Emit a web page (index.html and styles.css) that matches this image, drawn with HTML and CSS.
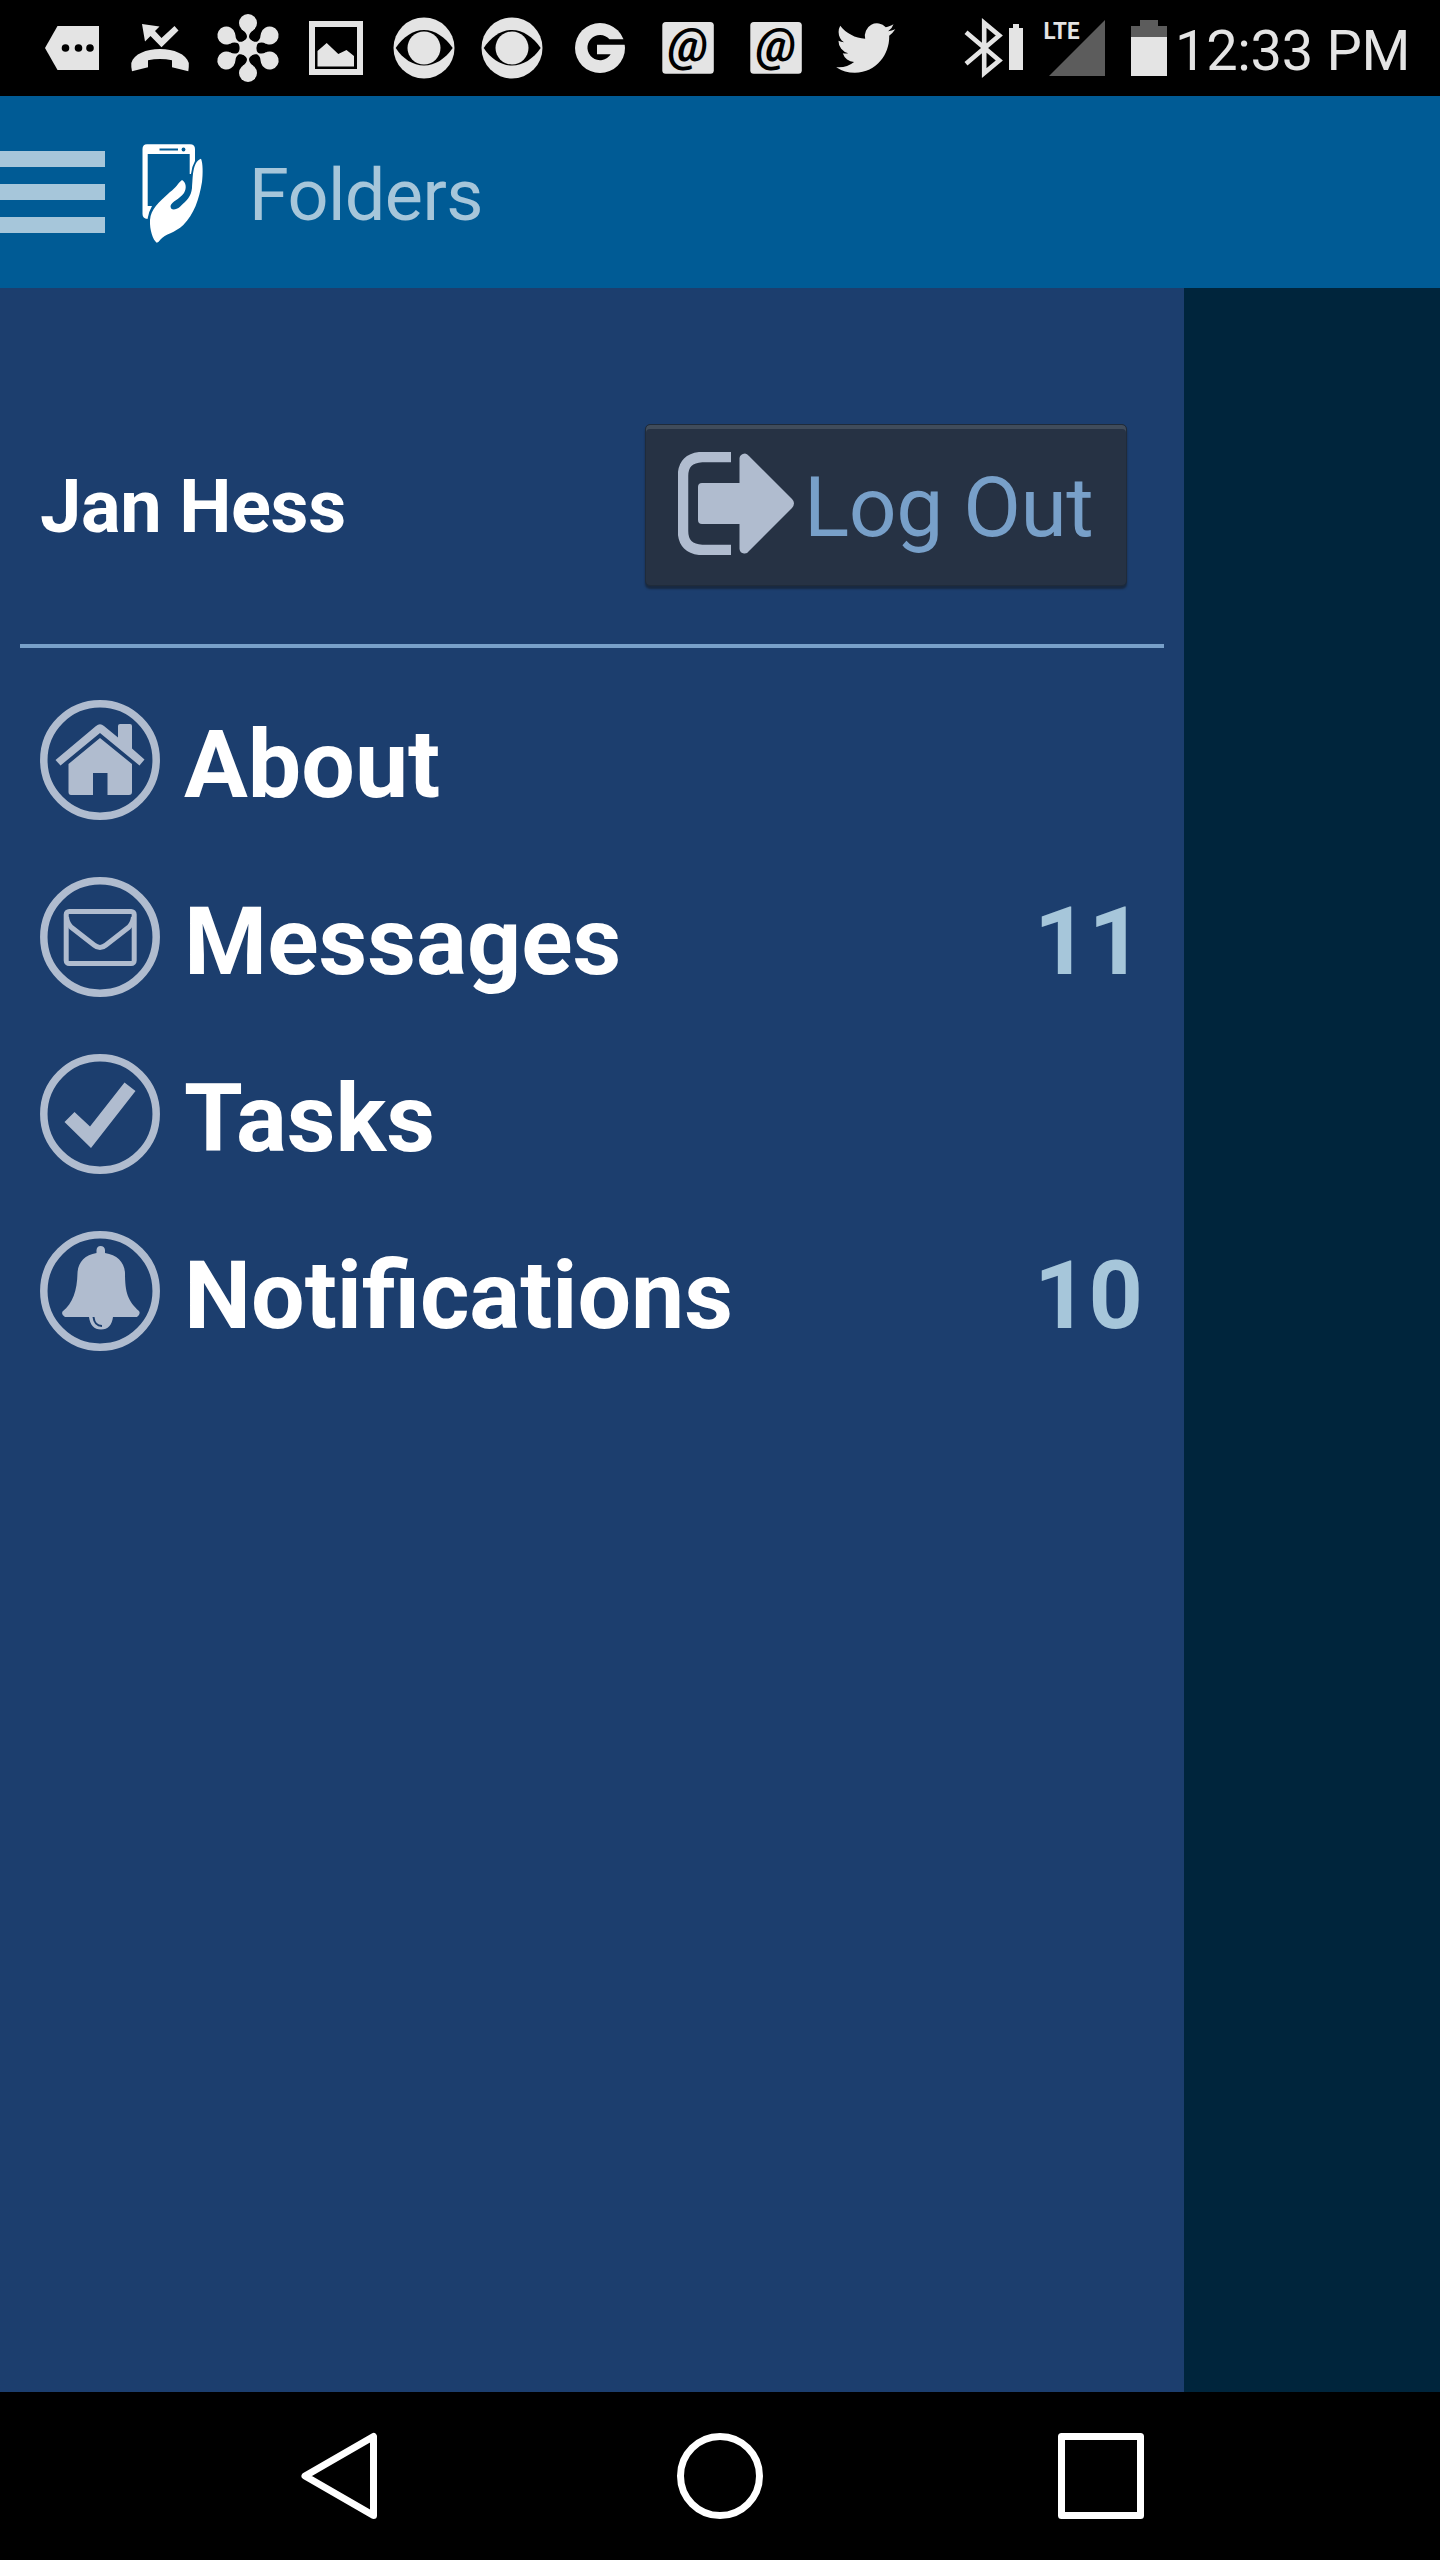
FILE: index.html
```html
<!DOCTYPE html>
<html lang="en">
<head>
  <meta charset="UTF-8">
  <meta name="viewport" content="width=device-width, initial-scale=1.0">
  <title>Folders</title>
  <link rel="stylesheet" href="styles.css">
</head>
<body>
  <!-- Status bar -->
  <div class="status-bar">
    <div class="status-icons">
      <svg class="status-icon" viewBox="28 0 88 96">
        <path d="M45 48L57.5 26H99V70H57.5z"/>
        <g fill="#000"><circle cx="65.5" cy="48" r="3.8"/><circle cx="78.5" cy="48" r="3.8"/><circle cx="90" cy="48" r="3.8"/></g>
      </svg>
      <svg class="status-icon" viewBox="116 0 88 96">
        <path d="M132 71.3Q131 66 131.3 63C134 54 146 49 160 49S186 54 188.8 63Q189 66 188.3 71.3L172 67.3V60.3Q160 57.5 148 60.3V67.3z"/>
        <path d="M142 24L159.5 26.5L155 31L161.5 38L174.5 26L178.5 30.5L161.5 47.3L150.5 36L145 41.5z"/>
      </svg>
      <svg class="status-icon" viewBox="204 0 88 96">
        <defs>
          <g id="arm">
            <circle cx="248" cy="23" r="9"/>
            <path d="M242.5 30Q247 33 247 37Q246 41 239 43L248 48L257 43Q250 41 249 37Q249 33 253.5 30z"/>
          </g>
        </defs>
        <use href="#arm"/>
        <use href="#arm" transform="rotate(60 248 48)"/>
        <use href="#arm" transform="rotate(120 248 48)"/>
        <use href="#arm" transform="rotate(180 248 48)"/>
        <use href="#arm" transform="rotate(240 248 48)"/>
        <use href="#arm" transform="rotate(300 248 48)"/>
      </svg>
      <svg class="status-icon" viewBox="292 0 88 96">
        <path fill-rule="evenodd" d="M309 21H363V75H309zM315 27V69H357V27z"/>
        <path d="M317.5 66.5V51L326.7 43L338.3 54L346.5 50L354 56V66.5z"/>
      </svg>
      <svg class="status-icon" viewBox="380 0 88 96">
        <circle cx="424" cy="48" r="30.5"/>
        <path fill="#000" d="M395.7 48C403 37 413 30 424 30S445 37 452.7 48C445 59 435 65.5 424 65.5S403 59 395.7 48z"/>
        <circle cx="424" cy="48" r="16.5"/>
      </svg>
      <svg class="status-icon" viewBox="380 0 88 96">
        <circle cx="424" cy="48" r="30.5"/>
        <path fill="#000" d="M395.7 48C403 37 413 30 424 30S445 37 452.7 48C445 59 435 65.5 424 65.5S403 59 395.7 48z"/>
        <circle cx="424" cy="48" r="16.5"/>
      </svg>
      <svg class="status-icon" viewBox="556 0 88 96">
        <circle cx="600" cy="48" r="25"/>
        <path fill="#000" d="M626 39.3H609.5A12.6 12.6 0 1 0 610.7 54.3H597V44.7H626z"/>
      </svg>
      <svg class="status-icon" viewBox="644 0 88 96">
        <rect x="662.3" y="22" width="51.5" height="51.7" rx="3.5"/>
        <text class="at-sign" x="688" y="60.500">@</text>
      </svg>
      <svg class="status-icon" viewBox="644 0 88 96">
        <rect x="662.3" y="22" width="51.5" height="51.7" rx="3.5"/>
        <text class="at-sign" x="688" y="60.500">@</text>
      </svg>
      <svg class="status-icon" viewBox="820 0 88 96">
        <path transform="translate(836.2 17.7) scale(2.46 2.53)" d="M23.953 4.57a10 10 0 01-2.825.775 4.958 4.958 0 002.163-2.723c-.951.555-2.005.959-3.127 1.184a4.92 4.92 0 00-8.384 4.482C7.69 8.095 4.067 6.13 1.64 3.162a4.822 4.822 0 00-.666 2.475c0 1.71.87 3.213 2.188 4.096a4.904 4.904 0 01-2.228-.616v.06a4.923 4.923 0 003.946 4.827 4.996 4.996 0 01-2.212.085 4.936 4.936 0 004.604 3.417 9.867 9.867 0 01-6.102 2.105c-.39 0-.779-.023-1.17-.067a13.995 13.995 0 007.557 2.209c9.053 0 13.998-7.496 13.998-13.985 0-.21 0-.42-.015-.63A9.935 9.935 0 0024 4.59z"/>
      </svg>
    </div>
    <div class="system-icons">
      <!-- Bluetooth, signal, battery -->
      <svg class="system-icon" viewBox="960 0 216 96">
        <path fill="none" stroke="#e4e4e4" stroke-width="4.6" d="M966 32.3L999.3 60.5L984.2 73V23L999.3 35.5L966 63.7"/>
        <path d="M1009 28H1013V24H1019V28H1023V70H1009z"/>
        <path fill="#5c5c5c" d="M1105 20V76H1049z"/>
        <text class="lte" x="1043.500" y="39" textLength="36" lengthAdjust="spacingAndGlyphs">LTE</text>
        <path fill="#5c5c5c" d="M1131 26H1140V20H1158V26H1167V38H1131z"/>
        <path d="M1131 37H1167V76H1131z"/>
      </svg>
      <span class="time">12:33 PM</span>
    </div>
  </div>

  <!-- App bar -->
  <header class="app-bar">
    <div class="menu-btn"><span></span><span></span><span></span></div>
    <svg class="app-logo" viewBox="135 138 75 112">
      <path fill-rule="evenodd" d="M142.5 149Q142.5 144.3 147 144.3H190Q195 144.3 195 149V161Q191.5 167 191 174H189.7V154H147.7V206H152Q148.5 212 147.5 219Q142.5 218.5 142.5 214zM159.5 148.5V150.5H178V148.5z"/>
      <circle cx="183.5" cy="149.5" r="1.9" fill="#005b95"/>
      <path d="M156.7 242.7C153 240 149.5 230 150 220C151 209 158 203 170 192C176 188 178 183 182 180C186 182 187 188 184 193C180 199 172 201 170.5 206C170.5 211 176 210 180 206.7C187 200 191 197 192 188C193 178 192 162 201 158.7C203 163 203 174 202 182C199 200 194 214 183.3 225C175 233 165 234 160.5 239.5Q158.5 242.5 156.7 242.7z"/>
    </svg>
    <h1>Folders</h1>
  </header>

  <div class="content">
    <!-- Drawer -->
    <nav class="drawer">
      <div class="user-row">
        <span class="user-name">Jan Hess</span>
        <button class="logout-btn">
          <svg class="logout-icon" viewBox="0 0 116 103">
            <path fill="none" stroke="#b0bccf" stroke-width="10.5" d="M53 5H24Q5 6 5 24V79Q5 97 24 98H53"/>
            <path d="M20 35Q20 31 24 31H61.5V6Q62 2 67 1.5Q69 1.5 71 4L114 47Q118 51 114 56L71 99Q69 102 66 101.5Q62 101 61.5 97V72H24Q20 72 20 68z"/>
          </svg>
          <span>Log Out</span>
        </button>
      </div>

      <ul class="menu">
        <li>
          <svg class="menu-icon" viewBox="0 0 120 120">
            <circle class="ring" cx="60" cy="60" r="56.2"/>
            <path d="M15.5 60L56 26Q60 22.5 64 26L78 37.5V26Q78 24 80 24H90Q92 24 92 26V48.5L104.5 59.5L99.5 65.5L60 33L20.5 65.5z"/>
            <path d="M60 38L92 64V92Q92 95 89 95H67.5V73H53V95H31Q28.5 95 28.5 92V64z"/>
          </svg>
          <span class="label">About</span>
        </li>
        <li>
          <svg class="menu-icon" viewBox="0 0 120 120">
            <circle class="ring" cx="60" cy="60" r="56.2"/>
            <rect class="line" x="26.2" y="34.5" width="68" height="52" rx="3"/>
            <path class="line" d="M26.5 40Q27 46 31 50L54 68Q60 73 66 68L89 50Q93 46 93.5 40"/>
          </svg>
          <span class="label">Messages</span>
          <span class="count">11</span>
        </li>
        <li>
          <svg class="menu-icon" viewBox="0 0 120 120">
            <circle class="ring" cx="60" cy="60" r="56.2"/>
            <path d="M24.5 68L34.5 58L50 72.5L84.5 28.5L95.5 37L51 94z"/>
          </svg>
          <span class="label">Tasks</span>
        </li>
        <li>
          <svg class="menu-icon" viewBox="0 0 120 120">
            <circle class="ring" cx="60" cy="60" r="56.2"/>
            <path d="M56.5 22V19Q57 15 60.5 15Q64.5 15 65 19V22C77 24 84.5 31 85 42C85 62 88 70 99 80Q101 83 97 86H73C72 94 68 98.5 61 98.5S50 94 49 86H25Q21 84 22.5 80.5C33 72 37 60 37.5 42C38 31 45 24 56.5 22z"/>
            <path class="bell-mark" d="M53.5 86Q54.5 95 62 95"/>
          </svg>
          <span class="label">Notifications</span>
          <span class="count">10</span>
        </li>
      </ul>
    </nav>
  </div>

  <!-- Navigation bar -->
  <footer class="nav-bar">
    <svg class="nav-icon" viewBox="0 0 88 88"><path d="M78.5 4.5V83.5L10 44z"/></svg>
    <svg class="nav-icon" viewBox="0 0 88 88"><circle cx="44" cy="44" r="39.5"/></svg>
    <svg class="nav-icon" viewBox="0 0 88 88"><rect x="4.5" y="4.5" width="79" height="79"/></svg>
  </footer>
</body>
</html>
```
FILE: styles.css
```css
* {
  box-sizing: border-box;
}
body {
  font-family: Roboto, sans-serif;
  background-color: #000;
  color: #fff;
  margin: 0;
  width: 1440px;
  height: 2560px;
  display: flex;
  flex-direction: column;
}
svg {
  display: block;
  flex: none;
}
.status-bar {
  height: 96px;
  padding-left: 28px;
  display: flex;
  justify-content: space-between;
  fill: #e4e4e4;
}
.status-icons,
.system-icons {
  display: flex;
}
.status-icon {
  width: 88px;
  height: 96px;
}
.at-sign {
  font-size: 46px;
  font-weight: 700;
  font-style: italic;
  text-anchor: middle;
  fill: #000;
}
.system-icons {
  width: 480px;
}
.system-icon {
  width: 216px;
  height: 96px;
}
.lte {
  font-size: 23.5px;
  font-weight: 700;
}
.time {
  color: #e4e4e4;
  font-size: 56px;
  line-height: 102px;
  letter-spacing: -0.3px;
  margin-left: -1px;
  white-space: nowrap;
}
.app-bar {
  height: 192px;
  background-color: #005b95;
  display: flex;
  align-items: center;
}
.menu-btn {
  width: 105px;
  display: flex;
  flex-direction: column;
  gap: 17px;
}
.menu-btn span {
  height: 16px;
  background-color: #a6c6da;
}
.app-logo {
  width: 75px;
  height: 112px;
  margin: 4px 39px 0 30px;
  fill: #fff;
}
.app-bar h1 {
  color: #a6c6da;
  font-size: 72px;
  font-weight: 400;
  line-height: 84px;
  letter-spacing: -0.6px;
  margin: 8px 0 0;
}
.content {
  height: 2104px;
  background-color: #00253c;
}
.drawer {
  width: 1184px;
  height: 100%;
  background-color: #1c3e6e;
  padding: 136px 20px 0;
}
.user-row {
  height: 224px;
  border-bottom: 4px solid #78a0c9;
  padding: 0 37px 0 20px;
  display: flex;
  justify-content: space-between;
  align-items: flex-start;
}
.user-name {
  font-size: 74px;
  font-weight: 700;
  line-height: 166px;
  letter-spacing: -0.4px;
}
.logout-btn {
  width: 482px;
  height: 162px;
  padding: 0 0 0 32px;
  border: 1px solid #1f2b3a;
  border-radius: 5px;
  background-color: #263244;
  box-shadow: inset 0 4px #404c5b, 0 3px 2px #182941;
  color: #78a0c9;
  font-family: inherit;
  font-size: 84px;
  letter-spacing: -0.5px;
  display: flex;
  align-items: center;
  white-space: nowrap;
}
.logout-btn span {
  padding-top: 4px;
}
.logout-icon {
  width: 116px;
  height: 103px;
  margin: 0 10px 3px 0;
  fill: #b0bccf;
}
.menu {
  list-style: none;
  margin: 0;
  padding: 52px 0 0;
}
.menu li {
  height: 177px;
  padding-left: 20px;
  display: flex;
  align-items: flex-start;
}
.menu-icon {
  width: 120px;
  height: 120px;
  margin-right: 24px;
  fill: #b0bccf;
}
.ring,
.line {
  fill: none;
  stroke: #b0bccf;
}
.ring {
  stroke-width: 7.5px;
}
.line {
  stroke-width: 5px;
}
.bell-mark {
  fill: none;
  stroke: #1c3e6e;
  stroke-width: 2px;
}
.label,
.count {
  font-size: 95px;
  font-weight: 700;
  line-height: 129px;
}
.label {
  flex: 1;
}
.count {
  width: 130px;
  color: #a6c6da;
}
.nav-bar {
  height: 168px;
  padding: 0 295px;
  display: flex;
  justify-content: space-between;
  align-items: center;
}
.nav-icon {
  width: 88px;
  height: 88px;
  fill: none;
  stroke: #fff;
  stroke-width: 7px;
  stroke-linejoin: round;
}
```
